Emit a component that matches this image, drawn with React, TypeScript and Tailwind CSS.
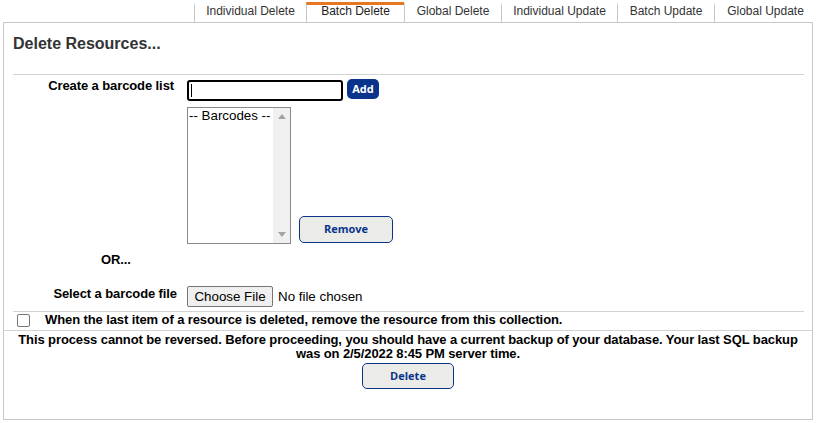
import React from "react";

const tabs = [
  { label: "Individual Delete", w: "w-[112px]" },
  { label: "Batch Delete", w: "w-[98px]", active: true },
  { label: "Global Delete", w: "w-[97px]" },
  { label: "Individual Update", w: "w-[116px]" },
  { label: "Batch Update", w: "w-[97px]" },
  { label: "Global Update", w: "w-[102px]" },
];

export default function App() {
  return (
    <div className="w-[816px] h-[423px] bg-white font-['Liberation_Sans',Arial,sans-serif] text-black overflow-hidden">
      {/* Tabs */}
      <div className="flex justify-end pt-[2px]">
        {tabs.map((t) => (
          <div
            key={t.label}
            className={
              "h-[20px] box-border border-l border-l-[#c8c8c8] border-t-[3px] text-center text-[12px] leading-[13px] " +
              t.w +
              (t.active ? " border-t-[#e87722] text-[#222]" : " border-t-transparent text-[#333]")
            }
          >
            {t.label}
          </div>
        ))}
      </div>

      {/* Panel */}
      <div className="ml-[3px] w-[810px] h-[398px] box-border border border-[#c8c8c8]">
        <div className="pl-[9px] pt-[12px] text-[16px] leading-[18px] font-bold text-[#333]">
          Delete Resources...
        </div>
        <div className="mt-[21px] ml-[9px] mr-[8px] h-px bg-[#d3d3d3]" />

        {/* Row 1 */}
        <div className="flex items-start mt-[4px]">
          <div className="w-[170px] -mt-[1px] text-right text-[13px] leading-[15px] font-bold tracking-[-0.1px]">
            Create a barcode list
          </div>
          <div className="ml-[13px] mt-[1px] w-[156px] h-[21px] box-border border-2 border-black rounded-[3px] flex items-center">
            <div className="ml-[2px] w-px h-[13px] bg-black" />
          </div>
          <div className="ml-[4px] w-[32px] h-[20px] rounded-[5px] bg-[#0a348c] text-white font-['Open_Sans',sans-serif] font-bold text-[11px] flex items-center justify-center">
            Add
          </div>
        </div>

        {/* Row 2 */}
        <div className="flex items-end mt-[6px]">
          <div className="w-[183px]" />
          <div className="w-[104px] h-[137px] box-border border border-[#8a8a8a] flex">
            <div className="flex-1 pl-[1px] text-[13.33px] leading-[16px]">-- Barcodes --</div>
            <div className="w-[17px] h-full bg-[#f0f0f0] flex flex-col items-center justify-between py-[6px]">
              <svg width="8" height="5" viewBox="0 0 8 5">
                <polygon points="4,0 8,5 0,5" fill="#a3a3a3" />
              </svg>
              <svg width="8" height="5" viewBox="0 0 8 5">
                <polygon points="0,0 8,0 4,5" fill="#a3a3a3" />
              </svg>
            </div>
          </div>
          <div className="ml-[8px] mb-[1px] w-[94px] h-[27px] box-border border-[1.5px] border-[#0a348c] rounded-[5px] bg-[#ebebe7] text-[#0a348c] font-['Open_Sans',sans-serif] font-bold text-[11px] flex items-center justify-center">
            Remove
          </div>
        </div>

        {/* OR */}
        <div className="mt-[8px] pl-[97px] text-[13px] leading-[15px] font-bold tracking-[-0.1px]">OR...</div>

        {/* Row 3 */}
        <div className="flex items-start mt-[19px]">
          <div className="w-[173px] text-right text-[13px] leading-[15px] font-bold tracking-[-0.1px]">
            Select a barcode file
          </div>
          <div className="ml-[10px] flex items-center">
            <div className="w-[86px] h-[21px] box-border border border-[#767676] rounded-[2px] bg-[#efefef] text-[13.33px] flex items-center justify-center">
              Choose File
            </div>
            <div className="ml-[5px] text-[13.33px]">No file chosen</div>
          </div>
        </div>

        <div className="mt-[4px] ml-[9px] mr-[8px] h-px bg-[#d3d3d3]" />

        {/* Row 4 */}
        <div className="flex items-start">
          <div className="ml-[13px] mt-[2px] w-[13px] h-[13px] box-border border border-[#767676] rounded-[2px] bg-white" />
          <div className="ml-[15px] text-[13px] leading-[15px] font-bold tracking-[-0.1px]">
            When the last item of a resource is deleted, remove the resource from this collection.
          </div>
        </div>

        <div className="mt-[3px] h-px bg-[#d3d3d3]" />

        <div className="mt-[2px] px-[8px] text-center text-[13px] leading-[14px] font-bold tracking-[-0.1px]">
          This process cannot be reversed. Before proceeding, you should have a current backup of your database. Your last SQL backup was on 2/5/2022 8:45 PM server time.
        </div>

        <div className="mt-[2px] mx-auto w-[92px] h-[26px] box-border border-[1.5px] border-[#0a348c] rounded-[5px] bg-[#ebebe7] text-[#0a348c] font-['Open_Sans',sans-serif] font-bold text-[11px] flex items-center justify-center">
          Delete
        </div>
      </div>
    </div>
  );
}
